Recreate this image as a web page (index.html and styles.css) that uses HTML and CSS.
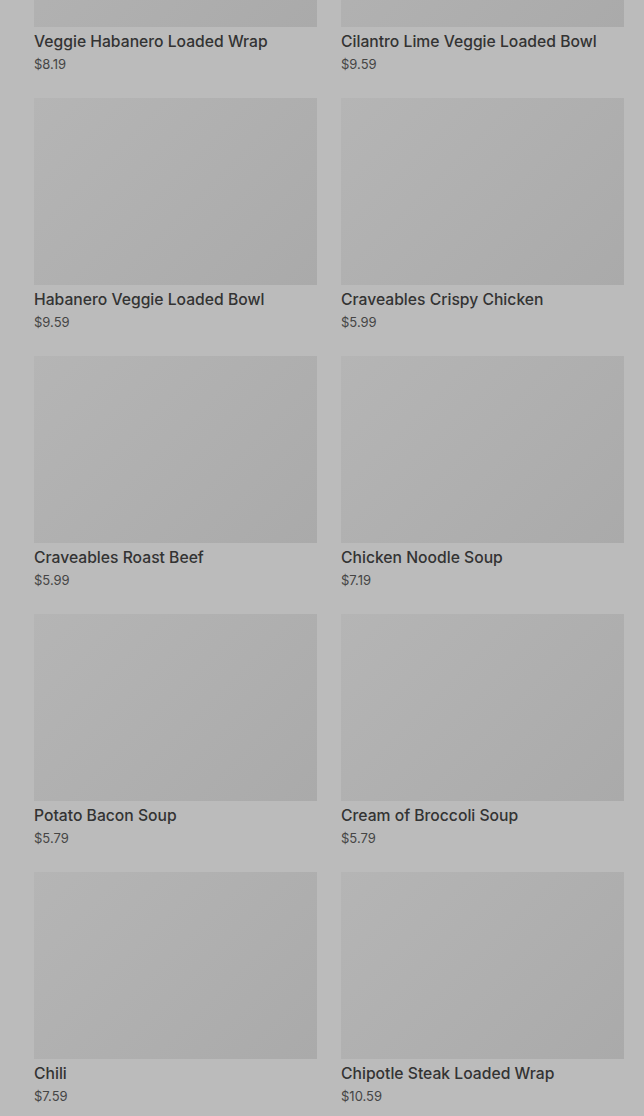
FILE: index.html
```html
<!DOCTYPE html>
<html lang="en">

<head>
    <meta charset="UTF-8">
    <meta name="viewport" content="width=device-width, initial-scale=1.0">
    <link rel="stylesheet" href="styles.css">
    <title>Menu</title>
</head>

<body>
    <div class="menu-grid">
        <div class="item-card">
            <div class="item-image"></div>
            <div class="item-name">Veggie Habanero Loaded Wrap</div>
            <div class="item-price">$8.19</div>
        </div>
        <div class="item-card">
            <div class="item-image"></div>
            <div class="item-name">Cilantro Lime Veggie Loaded Bowl</div>
            <div class="item-price">$9.59</div>
        </div>
        <div class="item-card">
            <div class="item-image"></div>
            <div class="item-name">Habanero Veggie Loaded Bowl</div>
            <div class="item-price">$9.59</div>
        </div>
        <div class="item-card">
            <div class="item-image"></div>
            <div class="item-name">Craveables Crispy Chicken</div>
            <div class="item-price">$5.99</div>
        </div>
        <div class="item-card">
            <div class="item-image"></div>
            <div class="item-name">Craveables Roast Beef</div>
            <div class="item-price">$5.99</div>
        </div>
        <div class="item-card">
            <div class="item-image"></div>
            <div class="item-name">Chicken Noodle Soup</div>
            <div class="item-price">$7.19</div>
        </div>
        <div class="item-card">
            <div class="item-image"></div>
            <div class="item-name">Potato Bacon Soup</div>
            <div class="item-price">$5.79</div>
        </div>
        <div class="item-card">
            <div class="item-image"></div>
            <div class="item-name">Cream of Broccoli Soup</div>
            <div class="item-price">$5.79</div>
        </div>
        <div class="item-card">
            <div class="item-image"></div>
            <div class="item-name">Chili</div>
            <div class="item-price">$7.59</div>
        </div>
        <div class="item-card">
            <div class="item-image"></div>
            <div class="item-name">Chipotle Steak Loaded Wrap</div>
            <div class="item-price">$10.59</div>
        </div>
    </div>
</body>

</html>
```

FILE: styles.css
```css
body {
    margin: 0;
    background-color: #bbbbbb;
    font-family: Inter, "Noto Sans", sans-serif;
    overflow: hidden;
}

.menu-grid {
    display: grid;
    grid-template-columns: 283px 283px;
    column-gap: 24px;
    padding: 0 20px 0 34px;
    /* page is scrolled, first row is cut off */
    margin-top: -160px;
}

.item-card {
    padding-bottom: 24px;
}

.item-image {
    height: 187px;
    background: linear-gradient(135deg, #b5b5b5, #aaaaaa);
}

.item-name {
    margin-top: 3px;
    font-size: 15.7px;
    font-weight: 500;
    line-height: 24px;
    color: #333333;
}

.item-price {
    font-size: 13px;
    line-height: 20px;
    color: #454545;
}
```
